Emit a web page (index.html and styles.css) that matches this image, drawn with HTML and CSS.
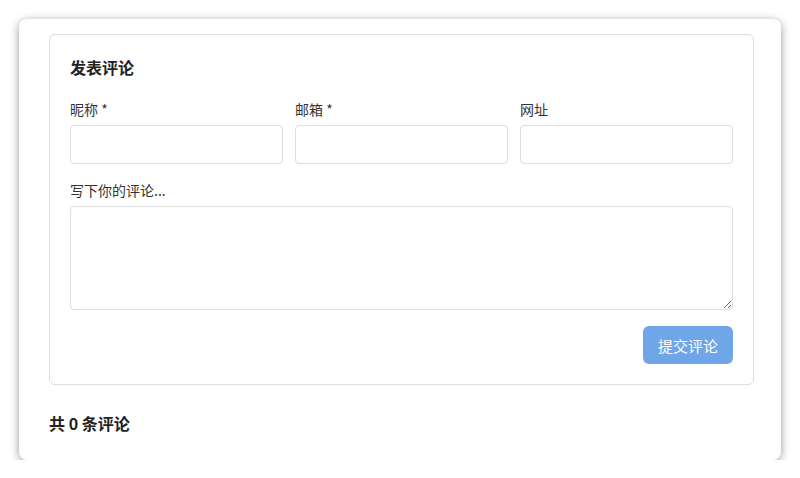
FILE: index.html
```html
<!DOCTYPE html>
<html lang="zh-CN">
  <head>
    <meta charset="UTF-8" />
    <meta name="viewport" content="width=device-width, initial-scale=1.0" />
    <title>评论</title>
    <link rel="stylesheet" href="styles.css">
  </head>
  <body>
    <div class="comments">
      <!-- Comment form -->
      <form class="comment-form">
        <h3>发表评论</h3>
        <div class="form-row">
          <div class="form-group">
            <label for="nick">昵称 *</label>
            <input type="text" id="nick" />
          </div>
          <div class="form-group">
            <label for="mail">邮箱 *</label>
            <input type="email" id="mail" />
          </div>
          <div class="form-group">
            <label for="site">网址</label>
            <input type="text" id="site" />
          </div>
        </div>
        <div class="form-group">
          <label for="content">写下你的评论...</label>
          <textarea id="content"></textarea>
        </div>
        <div class="form-actions">
          <button type="button" disabled>提交评论</button>
        </div>
      </form>

      <!-- Comment list -->
      <h3 class="comment-count">共 0 条评论</h3>
    </div>
  </body>
</html>
```

FILE: styles.css
```css
body {
  font-family: "Noto Sans CJK SC", "Noto Sans", sans-serif;
  background-color: #fff;
  margin: 0;
  padding: 19px 19px 0 19px;
  color: #333;
}

.comments {
  width: 762px;
  box-sizing: border-box;
  background-color: #fff;
  border-radius: 8px;
  box-shadow: 0 2px 10px rgba(0, 0, 0, 0.4);
  padding: 15px 27px 25px 30px;
}

/* Form box */
.comment-form {
  border: 1px solid #ddd;
  border-radius: 6px;
  padding: 20px;
}

.comment-form h3 {
  margin: 0 0 20px;
  font-size: 16px;
  line-height: 24px;
  font-weight: 700;
  color: #222;
}

.form-row {
  display: grid;
  grid-template-columns: repeat(3, 1fr);
  gap: 12px;
}

.form-group {
  display: flex;
  flex-direction: column;
  margin-bottom: 16px;
}

.form-group label {
  font-size: 14px;
  line-height: 20px;
  margin-bottom: 6px;
  color: #333;
}

.form-group input,
.form-group textarea {
  box-sizing: border-box;
  border: 1px solid #ddd;
  border-radius: 4px;
  font-family: inherit;
  font-size: 14px;
  padding: 8px 10px;
}

.form-group input {
  height: 39px;
}

.form-group textarea {
  height: 104px;
  resize: vertical;
}

.form-actions {
  display: flex;
  justify-content: flex-end;
}

.form-actions button {
  width: 90px;
  height: 38px;
  border: none;
  border-radius: 6px;
  background-color: #4a90e2;
  opacity: 0.8;
  color: #fff;
  font-family: inherit;
  font-size: 15px;
  cursor: pointer;
}

.comment-count {
  margin: 26px 0 0;
  font-size: 16px;
  line-height: 24px;
  font-weight: 700;
  color: #222;
}
```
